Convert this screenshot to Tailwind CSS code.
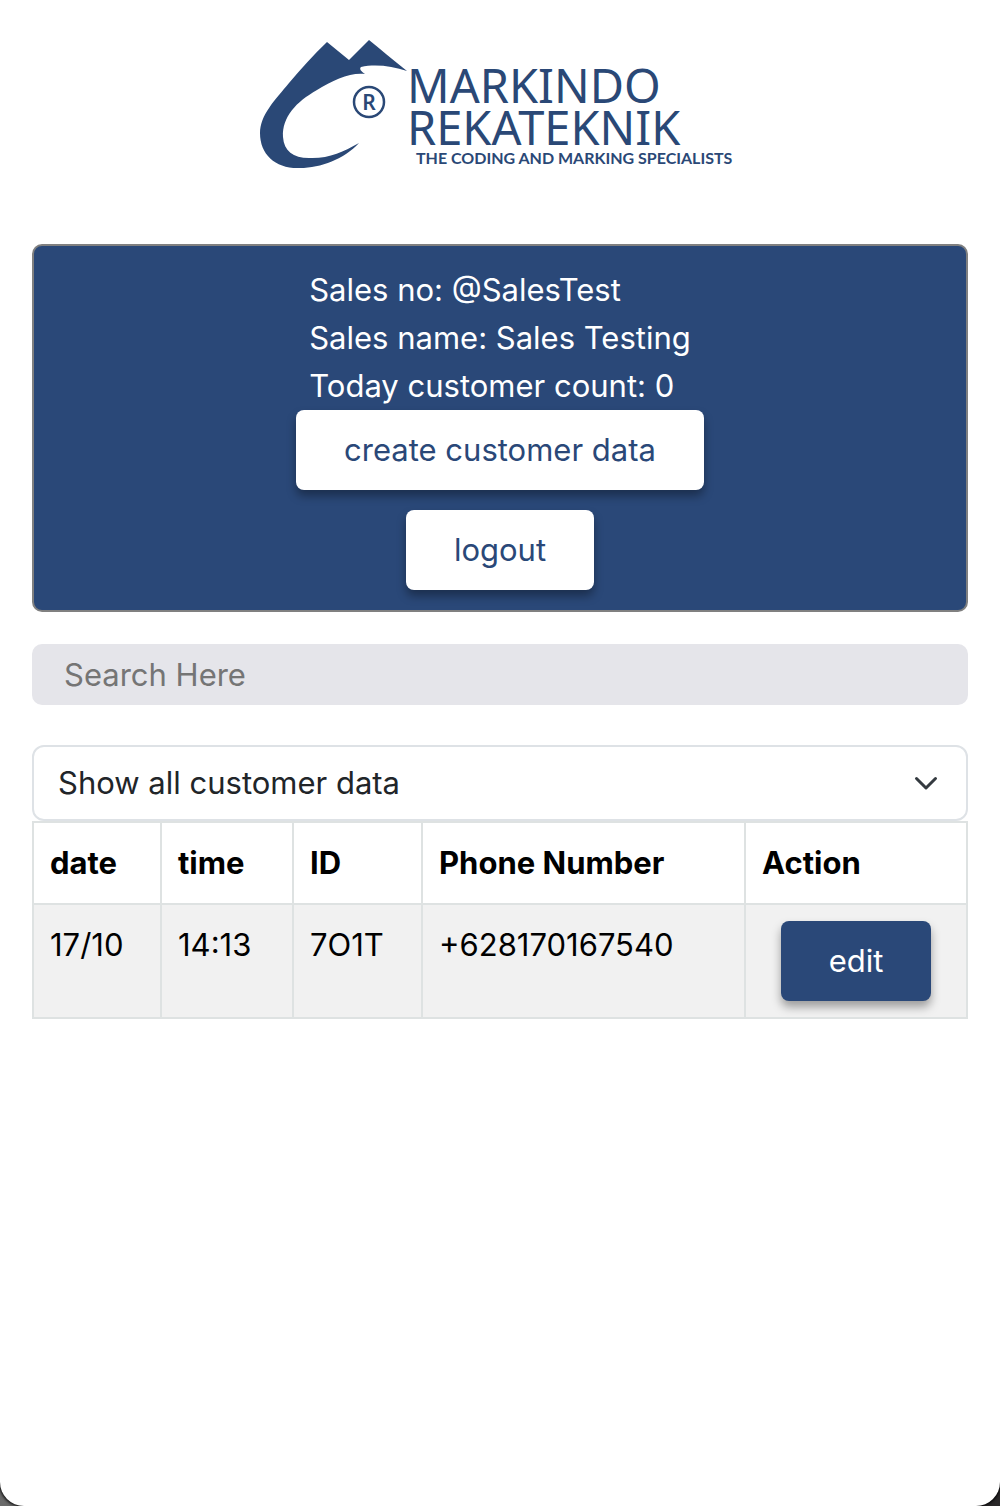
<!DOCTYPE html>
<html lang="en" class="bg-linear-to-r from-[#6b6b6b] to-[#2a2829]">
<head>
<meta charset="utf-8">
<meta name="viewport" content="width=device-width, initial-scale=1">
<title>Markindo Rekateknik</title>
<script src="https://cdn.jsdelivr.net/npm/@tailwindcss/browser@4"></script>
</head>
<body class="min-h-screen rounded-b-3xl bg-white px-8 pt-10 font-[Inter,sans-serif] text-[31px] leading-[48px] text-black shadow-[0_0_3px_1px_#000]">
  <header class="flex justify-center">
    <svg class="h-[132px] w-[480px]" viewBox="0 0 480 132" role="img" aria-label="Markindo Rekateknik, the coding and marking specialists">
      <g fill="#2a4876">
        <path d="M67 2 L89 20 L109 0 C120 9 133 20 147 31 C132 26 115 24 101 27 C99 29 101 31 105 34 C91 32 73 40 57 50 C36 62 22 77 23 97 C24 111 33 118 49 118 C68 119 83 112 99 103 C84 119 61 128 40 128 C16 129 0 115 0 93 C0 75 15 60 29 43 C41 29 53 15 67 2 Z"/>
        <circle cx="109" cy="62" r="15" fill="none" stroke="#2a4876" stroke-width="2.5"/>
        <text x="109" y="70" text-anchor="middle" font-family="Noto Sans, sans-serif" font-size="21" font-weight="600">R</text>
        <text x="147" y="63" font-family="Noto Sans, sans-serif" font-size="47" font-weight="400">MARKINDO</text>
        <text x="147" y="105" font-family="Noto Sans, sans-serif" font-size="47" font-weight="400">REKATEKNIK</text>
        <text x="156" y="124" font-family="Lato, sans-serif" font-size="16" font-weight="700">THE CODING AND MARKING SPECIALISTS</text>
      </g>
    </svg>
  </header>

  <main class="mt-[72px]">
    <section class="flex flex-col items-center rounded-[10px] border-2 border-[#808080] bg-[#2a4878] py-5 text-white">
      <div>
        <p>Sales no: @SalesTest</p>
        <p>Sales name: Sales Testing</p>
        <p>Today customer count: 0</p>
      </div>
      <button type="button" class="h-20 rounded-lg bg-white px-12 text-[#2a4878] shadow-[0_6px_10px_rgba(0,0,0,0.35)]">create customer data</button>
      <button type="button" class="mt-5 h-20 rounded-lg bg-white px-12 text-[#2a4878] shadow-[0_6px_10px_rgba(0,0,0,0.35)]">logout</button>
    </section>

    <input type="search" aria-label="Search" placeholder="Search Here" class="mt-8 block h-[61px] w-full rounded-[10px] bg-[#e5e5ea] px-8 placeholder:text-[#757575]">

    <div class="relative mt-10">
      <select aria-label="Customer filter" class="block h-[76px] w-full appearance-none rounded-xl border-2 border-[#dee2e6] bg-white px-6 text-[#212529]">
        <option>Show all customer data</option>
      </select>
      <svg class="pointer-events-none absolute top-[26px] right-[30px] size-6" viewBox="0 0 24 24" fill="none" stroke="#343a40" stroke-width="3" stroke-linecap="round" stroke-linejoin="round" aria-hidden="true"><path d="M2.500 7.500 L12 17 L21.500 7.500"/></svg>
    </div>

    <table class="w-full table-fixed border-collapse text-left">
      <colgroup>
        <col class="w-[128px]"><col class="w-[132px]"><col class="w-[129px]"><col class="w-[323px]"><col>
      </colgroup>
      <thead>
        <tr>
          <th class="border-2 border-[#dee2e2] p-4 font-bold">date</th>
          <th class="border-2 border-[#dee2e2] p-4 font-bold">time</th>
          <th class="border-2 border-[#dee2e2] p-4 font-bold">ID</th>
          <th class="border-2 border-[#dee2e2] p-4 font-bold">Phone Number</th>
          <th class="border-2 border-[#dee2e2] p-4 font-bold">Action</th>
        </tr>
      </thead>
      <tbody>
        <tr class="bg-[#f1f1f1] align-top">
          <td class="border-2 border-[#dee2e2] p-4">17/10</td>
          <td class="border-2 border-[#dee2e2] p-4">14:13</td>
          <td class="border-2 border-[#dee2e2] p-4">7O1T</td>
          <td class="border-2 border-[#dee2e2] p-4">+628170167540</td>
          <td class="border-2 border-[#dee2e2] p-4"><button type="button" class="mx-auto block h-20 rounded-lg bg-[#2a4878] px-12 text-white shadow-[0_6px_10px_rgba(0,0,0,0.35)]">edit</button></td>
        </tr>
      </tbody>
    </table>
  </main>
</body>
</html>
